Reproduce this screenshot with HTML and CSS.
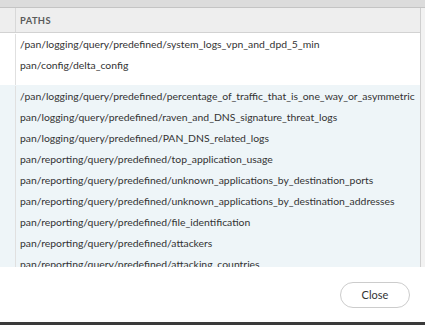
FILE: index.html
```html
<!DOCTYPE html>
<html lang="en">
<head>
  <meta charset="UTF-8">
  <meta name="viewport" content="width=device-width, initial-scale=1.0">
  <title>Paths</title>
  <link rel="stylesheet" href="styles.css">
</head>
<body>
  <div class="dialog">
    <div class="topbar"></div>

    <div class="table-area">
      <div class="table">
        <div class="row head">
          <div class="cell-side"></div>
          <div class="cell">PATHS</div>
        </div>

        <div class="group">
          <div class="row">
            <div class="cell-side"></div>
            <div class="cell">/pan/logging/query/predefined/system_logs_vpn_and_dpd_5_min</div>
          </div>
          <div class="row">
            <div class="cell-side"></div>
            <div class="cell">pan/config/delta_config</div>
          </div>
          <div class="row spacer">
            <div class="cell-side"></div>
            <div class="cell"></div>
          </div>
        </div>

        <div class="group shaded">
          <div class="row">
            <div class="cell-side"></div>
            <div class="cell">/pan/logging/query/predefined/percentage_of_traffic_that_is_one_way_or_asymmetric</div>
          </div>
          <div class="row">
            <div class="cell-side"></div>
            <div class="cell">pan/logging/query/predefined/raven_and_DNS_signature_threat_logs</div>
          </div>
          <div class="row">
            <div class="cell-side"></div>
            <div class="cell">pan/logging/query/predefined/PAN_DNS_related_logs</div>
          </div>
          <div class="row">
            <div class="cell-side"></div>
            <div class="cell">pan/reporting/query/predefined/top_application_usage</div>
          </div>
          <div class="row">
            <div class="cell-side"></div>
            <div class="cell">pan/reporting/query/predefined/unknown_applications_by_destination_ports</div>
          </div>
          <div class="row">
            <div class="cell-side"></div>
            <div class="cell">pan/reporting/query/predefined/unknown_applications_by_destination_addresses</div>
          </div>
          <div class="row">
            <div class="cell-side"></div>
            <div class="cell">pan/reporting/query/predefined/file_identification</div>
          </div>
          <div class="row">
            <div class="cell-side"></div>
            <div class="cell">pan/reporting/query/predefined/attackers</div>
          </div>
          <div class="row">
            <div class="cell-side"></div>
            <div class="cell">pan/reporting/query/predefined/attacking_countries</div>
          </div>
        </div>
      </div>
      <div class="scroll-track"></div>
    </div>

    <div class="footer">
      <button class="close-btn">Close</button>
    </div>
    <div class="bottom-edge"></div>
  </div>
</body>
</html>
```

FILE: styles.css
```css
* {
  margin: 0;
  padding: 0;
  box-sizing: border-box;
}

body {
  width: 425px;
  height: 325px;
  overflow: hidden;
  background: #fff;
  font-family: Lato, 'Open Sans', sans-serif;
  color: #333;
}

.dialog {
  display: flex;
  flex-direction: column;
  height: 325px;
}

.topbar {
  height: 8px;
  background: #dcdcdc;
  border-bottom: 1px solid #c4c4c4;
}

.table-area {
  display: flex;
  height: 259px;
  overflow: hidden;
}

.table {
  flex: 1;
  border-right: 1px solid #cfcfcf;
  overflow: hidden;
}

.scroll-track {
  width: 4px;
  background: #f2f2f2;
}

.row {
  display: flex;
  height: 20.8px;
  align-items: center;
}

.cell-side {
  width: 16px;
  align-self: stretch;
  border-right: 1px solid #e0e0e0;
}

.cell {
  flex: 1;
  padding-left: 4px;
  font-size: 10.4px;
  white-space: nowrap;
  overflow: hidden;
}

.row.head {
  height: 25px;
  background: #eeeeee;
  border-bottom: 1px solid #d2d2d2;
}

.row.head .cell {
  font-size: 9.3px;
  font-weight: bold;
  letter-spacing: 0.4px;
  color: #5a5a5a;
}

.row.head .cell-side {
  border-right-color: #d8d8d8;
}

.group {
  padding-top: 1px;
}

.row.spacer {
  height: 9px;
}

.group.shaded {
  background: #eef5f8;
}

.group.shaded .row {
  height: 21px;
}

.footer {
  flex: 1;
  display: flex;
  justify-content: flex-end;
  align-items: center;
  padding-right: 15px;
}

.close-btn {
  width: 70px;
  height: 26px;
  border: 1px solid #cccccc;
  border-radius: 13px;
  background: #fff;
  font-family: Lato, 'Open Sans', sans-serif;
  font-size: 11px;
  color: #333;
  cursor: pointer;
}

.bottom-edge {
  height: 3px;
  background: #3a3a3a;
}
```
